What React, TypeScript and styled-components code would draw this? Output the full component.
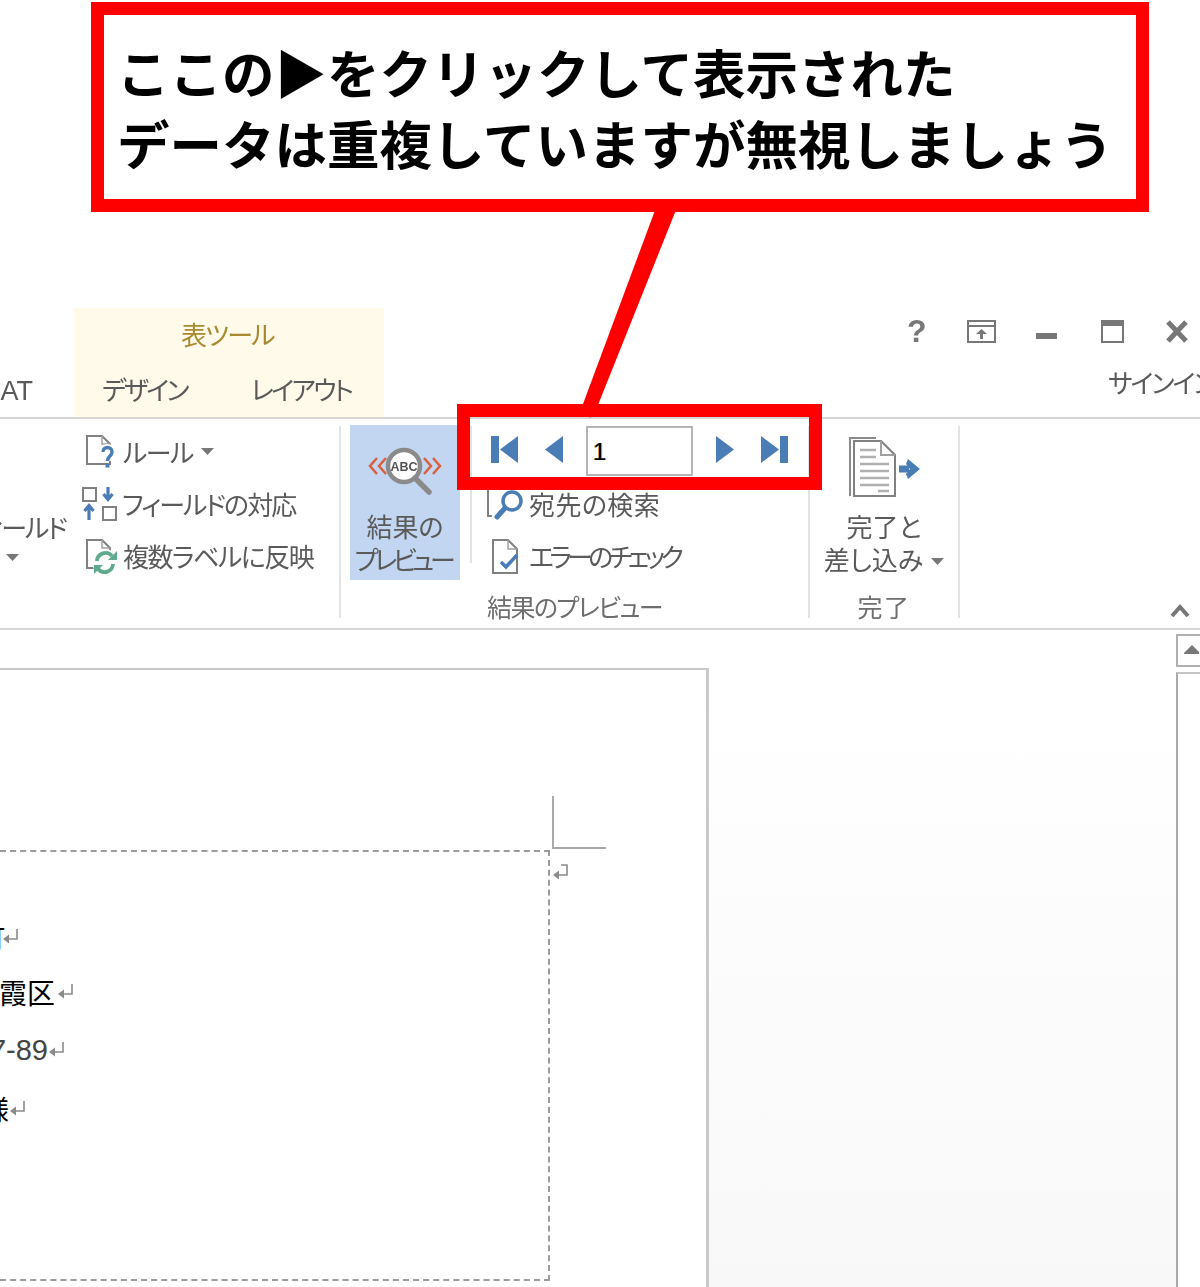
import React from "react";
import styled, { createGlobalStyle } from "styled-components";

const JP = `"Noto Sans CJK JP", "Noto Sans", sans-serif`;
const INK = "#5a5a5a";
const BLUE = "#4a7db5";

const Global = createGlobalStyle`
  html, body { margin: 0; padding: 0; background: #fff; overflow: hidden; }
  #root { width: 1200px; height: 1287px; overflow: hidden; }
`;

const Screen = styled.div`
  position: relative;
  width: 1200px;
  height: 1287px;
  overflow: hidden;
  background: #fff;
  display: flex;
  flex-direction: column;
  font-family: ${JP};
`;

const Callout = styled.div`
  box-sizing: border-box;
  margin: 2px 0 0 91px;
  width: 1058px;
  height: 210px;
  flex: none;
  border: 13px solid #ff0000;
  padding: 21px 0 0 13px;
  background: #fff;
  color: #000;
  font-size: 52.5px;
  font-weight: 700;
  line-height: 71px;
  white-space: nowrap;
`;

const Pointer = styled.svg`
  position: absolute;
  left: 570px;
  top: 205px;
`;

const TabBar = styled.div`
  flex: none;
  margin-top: 96px;
  height: 109px;
  display: flex;
  filter: blur(0.35px);
`;

const ClippedTab = styled.div`
  width: 74px;
  flex: none;
  display: flex;
  justify-content: flex-end;
  align-items: flex-end;
  box-sizing: border-box;
  padding: 0 41px 10px 0;
  color: ${INK};
  font: 27px "Liberation Sans", sans-serif;
  white-space: nowrap;
`;

const ContextTabs = styled.div`
  width: 310px;
  flex: none;
  background: #fffaea;
  display: flex;
  flex-direction: column;
  align-items: stretch;
`;

const ContextTitle = styled.div`
  height: 54px;
  padding-left: 107px;
  line-height: 52px;
  color: #a88b2f;
  font-size: 26px;
  font-feature-settings: "palt";
  letter-spacing: -1.8px;
  white-space: nowrap;
`;

const ContextRow = styled.div`
  display: flex;
  padding-left: 28px;
  gap: 64px;
  line-height: 54px;
  color: ${INK};
  font-size: 26px;
  font-feature-settings: "palt";
  letter-spacing: -2.6px;
  white-space: nowrap;
`;

const Account = styled.div`
  flex: 1;
  min-width: 0;
  display: flex;
  flex-direction: column;
`;

const WindowButtons = styled.div`
  height: 50px;
  padding-bottom: 4px;
  box-sizing: border-box;
  display: flex;
  align-items: center;
`;

const HelpMark = styled.span`
  margin-left: 523px;
  width: 20px;
  color: #777;
  font: 700 32px/32px "Liberation Sans", sans-serif;
`;

const WindowIcon = styled.svg<{ $gap: number; $drop?: number }>`
  margin-left: ${(p) => p.$gap}px;
  margin-top: ${(p) => p.$drop ?? 0}px;
  flex: none;
`;

const SignIn = styled.div`
  margin: 9px 0 0 724px;
  color: ${INK};
  font-size: 26px;
  line-height: 30px;
  font-feature-settings: "palt";
  letter-spacing: -2px;
  white-space: nowrap;
`;

const Ribbon = styled.div`
  flex: none;
  box-sizing: border-box;
  height: 213px;
  border-top: 2px solid #d6d6d6;
  border-bottom: 2px solid #d9d9d9;
  display: flex;
  align-items: flex-start;
  padding-top: 7px;
  filter: blur(0.35px);
`;

const Group = styled.div<{ $width: number }>`
  box-sizing: border-box;
  width: ${(p) => p.$width}px;
  flex: none;
  height: 192px;
  border-right: 2px solid #e3e3e3;
  display: flex;
  flex-direction: column;
`;

const GroupBody = styled.div`
  height: 168px;
  display: flex;
  align-items: flex-start;
`;

const GroupLabel = styled.div<{ $track: number }>`
  flex: 1;
  text-align: center;
  color: #6e6e6e;
  font-size: 25px;
  line-height: 24px;
  font-feature-settings: "palt";
  letter-spacing: ${(p) => p.$track}px;
  white-space: nowrap;
`;

const ClippedField = styled.div`
  width: 66px;
  flex: none;
  margin-top: 82px;
  display: flex;
  flex-direction: column;
  align-items: flex-end;
  color: ${INK};
  font-size: 26px;
  line-height: 38px;
  font-feature-settings: "palt";
  letter-spacing: -2px;
  white-space: nowrap;
`;

const FieldCaret = styled.svg`
  align-self: flex-start;
  margin: 8px 0 0 6px;
`;

const Stack = styled.div<{ $lead: number; $divider?: boolean }>`
  margin-left: ${(p) => p.$lead}px;
  display: flex;
  flex-direction: column;
  ${(p) =>
    p.$divider
      ? `background: linear-gradient(#e3e3e3, #e3e3e3) left top / 2px 137px no-repeat;`
      : ""}
`;

const Row = styled.div<{ $inset?: number }>`
  height: 52px;
  display: flex;
  align-items: center;
  padding-left: ${(p) => p.$inset ?? 0}px;
  white-space: nowrap;
`;

const RowIcon = styled.svg<{ $gap: number }>`
  flex: none;
  margin-right: ${(p) => p.$gap}px;
`;

const RowText = styled.span<{ $track?: number }>`
  color: ${INK};
  font-size: 26px;
  line-height: 52px;
  font-feature-settings: "palt";
  letter-spacing: ${(p) => p.$track ?? 0}px;
`;

const Caret = styled.svg`
  margin-left: 8px;
  vertical-align: 4px;
`;

const PreviewButton = styled.div`
  box-sizing: border-box;
  margin-left: 9px;
  margin-top: -1px;
  width: 110px;
  height: 155px;
  flex: none;
  background: #c2d5f1;
  display: flex;
  flex-direction: column;
  align-items: center;
  padding-top: 22px;
`;

const ButtonLines = styled.div`
  margin-top: 14px;
  text-align: center;
  color: ${INK};
  font-size: 26px;
  line-height: 33px;
  font-feature-settings: "palt";
  white-space: nowrap;
`;

const TightLine = styled.span`
  display: inline-block;
  margin-left: -4px;
  letter-spacing: -4.3px;
`;

const NavRow = styled.div`
  height: 52px;
  display: flex;
  align-items: flex-start;
`;

const NavIcon = styled.svg<{ $left: number }>`
  flex: none;
  margin: 10px 0 0 ${(p) => p.$left}px;
`;

const RecordField = styled.div`
  box-sizing: border-box;
  width: 107px;
  height: 50px;
  margin-left: 23px;
  flex: none;
  border: 2px solid #b5b5b5;
  padding-left: 5px;
  color: #000;
  font: 24px/48px "Liberation Sans", sans-serif;
  text-shadow: 1px 0 #7cc4ff, -1px 0 #d9933c;
`;

const FinishButton = styled.div`
  flex: 1;
  display: flex;
  flex-direction: column;
  align-items: center;
  padding-top: 8px;
`;

const FinishLines = styled(ButtonLines)`
  margin-top: 9px;
`;

const Collapse = styled.svg`
  margin: 178px 0 0 210px;
  flex: none;
`;

const DocArea = styled.div`
  flex: 1;
  min-height: 0;
  display: flex;
`;

const Canvas = styled.div`
  width: 1176px;
  flex: none;
  padding-top: 38px;
  background: linear-gradient(#fff 12%, #f8f8f8 100%);
  overflow: hidden;
`;

const Sheet = styled.div`
  box-sizing: border-box;
  width: 709px;
  height: 640px;
  background: #fff;
  border-top: 2px solid #c9c9c9;
  border-right: 3px solid #c9c9c9;
  padding-top: 126px;
`;

const CropMark = styled.div`
  box-sizing: border-box;
  margin-left: 552px;
  width: 54px;
  height: 53px;
  border-left: 2px solid #aaa;
  border-bottom: 2px solid #aaa;
`;

const AddressRow = styled.div`
  display: flex;
  align-items: flex-start;
  margin-top: 1px;
`;

const AddressBox = styled.div`
  box-sizing: border-box;
  width: 550px;
  height: 431px;
  flex: none;
  border-top: 2px dashed #9c9c9c;
  border-right: 2px dashed #9c9c9c;
  border-bottom: 2px dashed #9c9c9c;
  padding-top: 56px;
`;

const AddressLine = styled.div<{ $end: number; $height: number }>`
  width: ${(p) => p.$end}px;
  height: ${(p) => p.$height}px;
  display: flex;
  justify-content: flex-end;
  align-items: center;
  color: #000;
  font-size: 28px;
  font-weight: 400;
  white-space: nowrap;
`;

const Digits = styled.span`
  color: #444;
  font: 29px "Liberation Sans", sans-serif;
`;

const ReturnMark = styled.svg<{ $gap?: number }>`
  flex: none;
  margin-left: ${(p) => p.$gap ?? 0}px;
`;

const BoxMark = styled(ReturnMark)`
  margin: 14px 0 0 2px;
`;

const ScrollBar = styled.div`
  flex: 1;
  display: flex;
  flex-direction: column;
  padding-top: 4px;
  background: #fff;
`;

const ScrollButton = styled.div`
  box-sizing: border-box;
  height: 33px;
  flex: none;
  display: flex;
  align-items: flex-start;
  border: 2px solid #b0b0b0;
  border-right: none;
  padding: 9px 0 0 6px;
`;

const ScrollTrack = styled.div`
  flex: 1;
  margin-top: 5px;
  border-top: 2px solid #c4c4c4;
  border-left: 2px solid #a9a9a9;
`;

const Frame = styled.div`
  position: absolute;
  left: 457px;
  top: 404px;
  box-sizing: border-box;
  width: 365px;
  height: 86px;
  border: 13px solid #ff0000;
  pointer-events: none;
`;

const Page = () => (
  <>
    <path d="M2 2H17L25 10V30H2Z" fill="#fff" stroke="#808080" strokeWidth="2" />
    <path d="M17 2V10H25" fill="none" stroke="#a0a0a0" strokeWidth="1.5" />
  </>
);

const Ret = ({ gap }: { gap?: number }) => (
  <ReturnMark $gap={gap} width="18" height="18" viewBox="0 0 18 18">
    <path d="M15 1V11H6" fill="none" stroke="#8a8a8a" strokeWidth="1.6" />
    <path d="M1 11L7 6.5V15.5Z" fill="#8a8a8a" />
  </ReturnMark>
);

const SmallCaret = () => (
  <Caret width="13" height="8" viewBox="0 0 13 8">
    <path d="M0 0H13L6.5 7Z" fill="#777" />
  </Caret>
);

export default function App() {
  return (
    <Screen>
      <Global />
      <Callout>
        ここの▶をクリックして表示された
        <br />
        データは重複していますが無視しましょう
      </Callout>

      <TabBar>
        <ClippedTab>AT</ClippedTab>
        <ContextTabs>
          <ContextTitle>表ツール</ContextTitle>
          <ContextRow>
            <span>デザイン</span>
            <span>レイアウト</span>
          </ContextRow>
        </ContextTabs>
        <Account>
          <WindowButtons>
            <HelpMark>?</HelpMark>
            <WindowIcon $gap={40} width="29" height="23" viewBox="0 0 29 23">
              <path d="M1 1H28V22H1Z" fill="none" stroke="#777" strokeWidth="2" />
              <path d="M1 6H28" stroke="#777" strokeWidth="2" />
              <path d="M14.5 9L20 14H16V19H13V14H9Z" fill="#777" />
            </WindowIcon>
            <WindowIcon $gap={40} $drop={10} width="21" height="6" viewBox="0 0 21 6">
              <path d="M0 0H21V6H0Z" fill="#777" />
            </WindowIcon>
            <WindowIcon $gap={44} width="23" height="23" viewBox="0 0 23 23">
              <path d="M1 1H22V22H1Z" fill="#fff" stroke="#777" strokeWidth="2" />
              <path d="M1 1H22V6H1Z" fill="#777" />
            </WindowIcon>
            <WindowIcon $gap={41} width="24" height="23" viewBox="0 0 24 23">
              <path d="M3 2L21 21M21 2L3 21" stroke="#777" strokeWidth="5" />
            </WindowIcon>
          </WindowButtons>
          <SignIn>サインイン</SignIn>
        </Account>
      </TabBar>

      <Ribbon>
        <Group $width={341}>
          <GroupBody>
            <ClippedField>
              フィールド
              <FieldCaret width="13" height="8" viewBox="0 0 13 8">
                <path d="M0 0H13L6.5 7Z" fill="#777" />
              </FieldCaret>
            </ClippedField>
            <Stack $lead={15}>
              <Row $inset={4}>
                <RowIcon $gap={8} width="30" height="36" viewBox="0 0 30 36">
                  <Page />
                  <path d="M18 18C18 12 27 12 27 18C27 22 22.5 22 22.5 27" fill="none" stroke="#fff" strokeWidth="7" />
                  <path d="M18 18C18 12 27 12 27 18C27 22 22.5 22 22.5 27" fill="none" stroke={BLUE} strokeWidth="3.4" />
                  <path d="M20.5 29.5H24.5V33.5H20.5Z" fill={BLUE} />
                </RowIcon>
                <RowText $track={-1.5}>ルール</RowText>
                <SmallCaret />
              </Row>
              <Row>
                <RowIcon $gap={4} width="37" height="36" viewBox="0 0 37 36">
                  <path d="M2 2H15V15H2ZM22 21H35V34H22Z" fill="none" stroke="#808080" strokeWidth="2" />
                  <path d="M27 1V11M22.5 8L27 13.5L31.5 8" fill="none" stroke={BLUE} strokeWidth="3.2" />
                  <path d="M8 34V22M3.5 25L8 19.5L12.5 25" fill="none" stroke={BLUE} strokeWidth="3.2" />
                </RowIcon>
                <RowText $track={-1.95}>フィールドの対応</RowText>
              </Row>
              <Row $inset={4}>
                <RowIcon $gap={4} width="34" height="36" viewBox="0 0 34 36">
                  <Page />
                  <circle cx="20" cy="24" r="13" fill="#fff" />
                  <path d="M12 23A8.5 8.5 0 0 1 27 18" fill="none" stroke="#5eaa8e" strokeWidth="3.8" />
                  <path d="M32 13V22H23Z" fill="#5eaa8e" />
                  <path d="M28 26A8.5 8.5 0 0 1 13 31" fill="none" stroke="#5eaa8e" strokeWidth="3.8" />
                  <path d="M9 36V27H18Z" fill="#5eaa8e" />
                </RowIcon>
                <RowText $track={-1.5}>複数ラベルに反映</RowText>
              </Row>
            </Stack>
          </GroupBody>
        </Group>

        <Group $width={469}>
          <GroupBody>
            <PreviewButton>
              <svg width="74" height="48" viewBox="0 0 74 48">
                <path
                  d="M9 11L2 19L9 27M18 11L11 19L18 27M56 11L63 19L56 27M65 11L72 19L65 27"
                  fill="none"
                  stroke="#d8603f"
                  strokeWidth="2.5"
                />
                <circle cx="36" cy="19" r="16" fill="#fff" stroke="#8a8a8a" strokeWidth="4.5" />
                <text x="36" y="23.5" textAnchor="middle" fontFamily="Liberation Sans" fontWeight="700" fontSize="12.5" fill="#555">
                  ABC
                </text>
                <path d="M47 31L61 45" stroke="#8a8a8a" strokeWidth="5.5" strokeLinecap="round" />
              </svg>
              <ButtonLines>
                結果の
                <br />
                <TightLine>プレビュー</TightLine>
              </ButtonLines>
            </PreviewButton>
            <Stack $lead={10} $divider>
              <NavRow>
                <NavIcon $left={21} width="27" height="27" viewBox="0 0 27 27">
                  <path d="M0 0H8V27H0ZM27 0V27L9 13.5Z" fill={BLUE} />
                </NavIcon>
                <NavIcon $left={27} width="18" height="27" viewBox="0 0 18 27">
                  <path d="M18 0V27L0 13.5Z" fill={BLUE} />
                </NavIcon>
                <RecordField>1</RecordField>
                <NavIcon $left={23} width="18" height="27" viewBox="0 0 18 27">
                  <path d="M0 0V27L18 13.5Z" fill={BLUE} />
                </NavIcon>
                <NavIcon $left={27} width="27" height="27" viewBox="0 0 27 27">
                  <path d="M0 0V27L18 13.5ZM19 0H27V27H19Z" fill={BLUE} />
                </NavIcon>
              </NavRow>
              <Row $inset={17}>
                <RowIcon $gap={5} width="37" height="32" viewBox="0 0 37 32">
                  <path d="M5 1H1V28H5" fill="none" stroke="#808080" strokeWidth="2" />
                  <circle cx="25" cy="13" r="9" fill="#fff" stroke={BLUE} strokeWidth="3.5" />
                  <path d="M18 20L10 29" stroke={BLUE} strokeWidth="5" strokeLinecap="round" />
                </RowIcon>
                <RowText $track={0.4}>宛先の検索</RowText>
              </Row>
              <Row $inset={21}>
                <RowIcon $gap={10} width="28" height="37" viewBox="0 0 28 37">
                  <path d="M2 2H17L26 11V35H2Z" fill="#fff" stroke="#808080" strokeWidth="2" />
                  <path d="M17 2V11H26" fill="none" stroke="#a0a0a0" strokeWidth="1.5" />
                  <path d="M10 24L15 29L26 17" fill="none" stroke={BLUE} strokeWidth="3.5" />
                </RowIcon>
                <RowText $track={-4.6}>エラーのチェック</RowText>
              </Row>
            </Stack>
          </GroupBody>
          <GroupLabel $track={-1.6}>結果のプレビュー</GroupLabel>
        </Group>

        <Group $width={150}>
          <GroupBody>
            <FinishButton>
              <svg width="72" height="66" viewBox="0 0 72 66">
                <path d="M1 3H28V5H3V62H1Z" fill="#8a8a8a" />
                <path d="M6 7H33L47 21V62H6Z" fill="#fff" stroke="#808080" strokeWidth="2" />
                <path d="M33 7V21H47" fill="none" stroke="#a0a0a0" strokeWidth="2" />
                <path d="M12 16H28M12 23H28M12 30H41M12 37H41M12 44H41M12 51H41M30 57H41" stroke="#b0b0b0" strokeWidth="2.5" />
                <path d="M51 35H61" stroke={BLUE} strokeWidth="7" />
                <path d="M60 25L72 35L60 45L58 40L62 35L58 30Z" fill={BLUE} />
              </svg>
              <FinishLines>
                完了と
                <br />
                差し込み
                <SmallCaret />
              </FinishLines>
            </FinishButton>
          </GroupBody>
          <GroupLabel $track={1.5}>完了</GroupLabel>
        </Group>

        <Collapse width="20" height="14" viewBox="0 0 20 14">
          <path d="M2 12L10 3L18 12" fill="none" stroke="#777" strokeWidth="4" />
        </Collapse>
      </Ribbon>

      <DocArea>
        <Canvas>
          <Sheet>
            <CropMark />
            <AddressRow>
              <AddressBox>
                <AddressLine $end={20} $height={57}>
                  町
                  <Ret gap={-3} />
                </AddressLine>
                <AddressLine $end={75} $height={54}>
                  霞区
                  <Ret gap={2} />
                </AddressLine>
                <AddressLine $end={66} $height={62}>
                  <Digits>7-89</Digits>
                  <Ret />
                </AddressLine>
                <AddressLine $end={27} $height={56}>
                  様
                  <Ret />
                </AddressLine>
              </AddressBox>
              <BoxMark width="18" height="18" viewBox="0 0 18 18">
                <path d="M9 1H15V11H6" fill="none" stroke="#8a8a8a" strokeWidth="1.6" />
                <path d="M1 11L7 6.5V15.5Z" fill="#8a8a8a" />
              </BoxMark>
            </AddressRow>
          </Sheet>
        </Canvas>
        <ScrollBar>
          <ScrollButton>
            <svg width="15" height="9" viewBox="0 0 15 9">
              <path d="M0 8L8 0L15 7V9H0Z" fill="#777" />
            </svg>
          </ScrollButton>
          <ScrollTrack />
        </ScrollBar>
      </DocArea>

      <Pointer width="120" height="220" viewBox="0 0 120 220">
        <path d="M87 0H108L26 205L20 213L13 199Z" fill="#ff0000" />
      </Pointer>
      <Frame />
    </Screen>
  );
}
